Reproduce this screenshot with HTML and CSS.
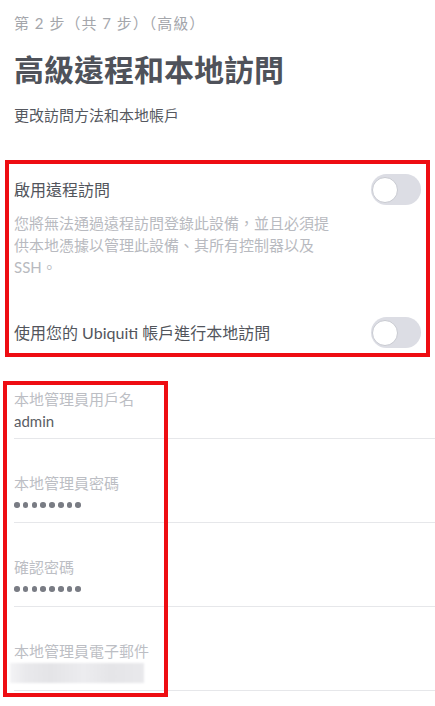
FILE: index.html
```html
<!DOCTYPE html>
<html lang="zh-Hant">
<head>
<meta charset="utf-8">
<title>高級遠程和本地訪問</title>
<link rel="stylesheet" href="styles.css">
</head>
<body>
<div class="page">
  <p class="step">第 2 步（共 7 步）（高級）</p>
  <h1 class="title">高級遠程和本地訪問</h1>
  <p class="subtitle">更改訪問方法和本地帳戶</p>

  <section class="options">
    <div class="option">
      <div class="option-row">
        <span class="option-label">啟用遠程訪問</span>
        <span class="toggle"><span class="knob"></span></span>
      </div>
      <p class="option-desc">您將無法通過遠程訪問登錄此設備，並且必須提供本地憑據以管理此設備、其所有控制器以及SSH。</p>
    </div>
    <div class="option option-second">
      <div class="option-row">
        <span class="option-label">使用您的 Ubiquiti 帳戶進行本地訪問</span>
        <span class="toggle"><span class="knob"></span></span>
      </div>
    </div>
  </section>

  <section class="fields">
    <div class="field">
      <div class="field-label">本地管理員用戶名</div>
      <div class="field-value">admin</div>
    </div>
    <div class="field">
      <div class="field-label">本地管理員密碼</div>
      <div class="field-value dots"><span></span><span></span><span></span><span></span><span></span><span></span><span></span><span></span></div>
    </div>
    <div class="field">
      <div class="field-label">確認密碼</div>
      <div class="field-value dots"><span></span><span></span><span></span><span></span><span></span><span></span><span></span><span></span></div>
    </div>
    <div class="field">
      <div class="field-label">本地管理員電子郵件</div>
      <div class="field-value"><div class="blurred"></div></div>
    </div>
  </section>

  <div class="mark mark-options"></div>
  <div class="mark mark-fields"></div>
</div>
</body>
</html>
```

FILE: styles.css
```css
html, body {
  margin: 0;
  padding: 0;
  background: #ffffff;
}

body {
  font-family: "Lato", "Noto Sans CJK TC", sans-serif;
  color: #50535a;
}

.page {
  position: relative;
  padding: 13px 0 0 14px;
  height: 693px;
  overflow: hidden;
}

.step {
  margin: 0;
  font-size: 15px;
  line-height: 20px;
  letter-spacing: 1px;
  color: #a4a6ab;
}

.title {
  margin: 18px 0 0;
  font-size: 30px;
  line-height: 36px;
  font-weight: 700;
  color: #4f525a;
}

.subtitle {
  margin: 18px 0 0;
  font-size: 15px;
  line-height: 20px;
  color: #55585f;
}

.options {
  margin-top: 49px;
  padding-right: 14px;
}

.option-row {
  display: flex;
  align-items: center;
  justify-content: space-between;
  height: 31px;
}

.option-label {
  font-size: 16px;
  line-height: 20px;
  color: #52555c;
}

.option-desc {
  margin: 7px 0 0;
  width: 322px;
  font-size: 15px;
  line-height: 22px;
  color: #b8bac0;
}

.option-second {
  margin-top: 39px;
}

.toggle {
  position: relative;
  flex: none;
  width: 50px;
  height: 31px;
  border-radius: 16px;
  background: #dcdde4;
}

.knob {
  position: absolute;
  left: 1px;
  top: 2.5px;
  width: 24px;
  height: 24px;
  border-radius: 50%;
  background: #ffffff;
  border: 1px solid #c8cad1;
}

.fields {
  margin-top: 7px;
}

.field {
  padding: 34px 0 7px;
  border-bottom: 1px solid #e6e7ea;
}

.field-label {
  font-size: 15px;
  line-height: 20px;
  color: #bcbec4;
}

.field-value {
  margin-top: 2px;
  height: 20px;
  font-size: 15px;
  line-height: 20px;
  color: #5a5d64;
}

.dots {
  display: flex;
  align-items: center;
  gap: 3.2px;
}

.dots span {
  width: 5.6px;
  height: 5.6px;
  border-radius: 50%;
  background: #797c84;
}

.blurred {
  width: 134px;
  height: 20px;
  margin-left: -4px;
  background: linear-gradient(90deg, #f3f3f5 0%, #e9e9ec 12%, #e4e4e7 30%, #ececef 55%, #e5e5e8 75%, #e9e9ec 100%);
  filter: blur(1.2px);
}

.mark {
  position: absolute;
  border: 4px solid #ee0d12;
  box-sizing: border-box;
}

.mark-options {
  left: 5px;
  top: 160px;
  width: 425px;
  height: 197px;
}

.mark-fields {
  left: 3px;
  top: 381px;
  width: 165px;
  height: 316px;
}
```
